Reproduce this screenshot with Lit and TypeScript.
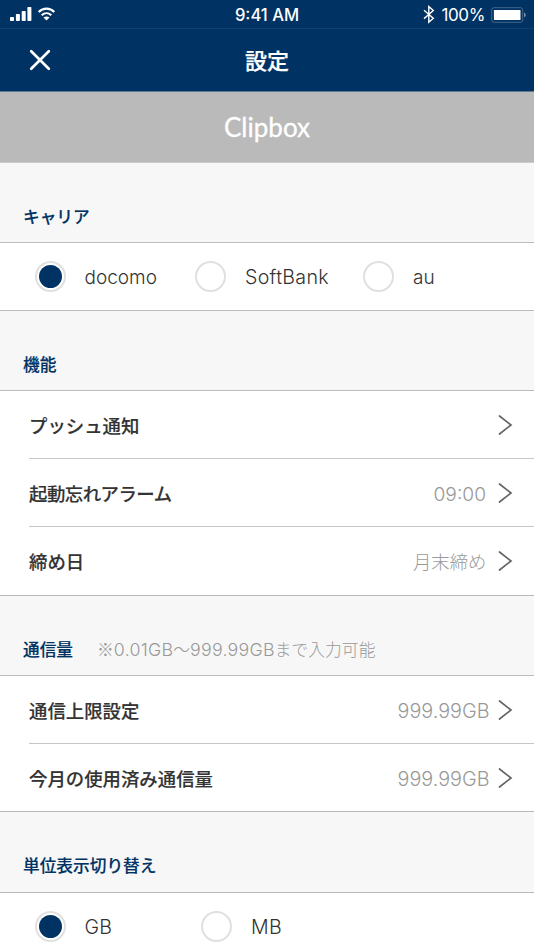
import { LitElement, html, css, svg, nothing } from "lit";
import { customElement, property, state } from "lit/decorators.js";
import { classMap } from "lit/directives/class-map.js";

const signalIcon = svg`<svg class="signal" width="22" height="14" viewBox="0 0 22 14" fill="#fff">
  <rect x="0" y="10" width="4" height="4" rx=".7"/><rect x="5.9" y="7" width="4" height="7" rx=".7"/>
  <rect x="11.7" y="4" width="4" height="10" rx=".7"/><rect x="17.4" y="0" width="4" height="14" rx=".7"/></svg>`;

const wifiIcon = svg`<svg class="wifi" width="18" height="14" viewBox="0 0 18 14">
  <g fill="none" stroke="#fff" stroke-width="2.100"><path d="M.7 5.100C5.200 .5 11.800 .5 16.300 5.100"/><path d="M3.700 8.300C6.500 5.500 10.500 5.500 13.300 8.300"/></g>
  <path fill="#fff" d="M8.500 13.500 5.500 10.500C7.200 9.100 9.800 9.100 11.500 10.500Z"/></svg>`;

const bluetoothIcon = svg`<svg class="bluetooth" width="12" height="19" viewBox="0 0 12 19">
  <path fill="none" stroke="#fff" stroke-width="1.400" d="M1 5.300 10.300 13.300 5.800 17.300V1.600L10.300 5.600 1 13.600"/></svg>`;

const batteryIcon = svg`<svg class="battery" width="36" height="16" viewBox="0 0 36 16">
  <rect x=".7" y=".7" width="31" height="14.600" rx="2.200" fill="none" stroke="#fff" stroke-opacity=".25" stroke-width="1"/>
  <rect x="2.900" y="3" width="26.600" height="10" rx=".5" fill="#fff"/>
  <path d="M33 5.600Q34.800 6.500 34.800 8T33 10.400Z" fill="#fff" fill-opacity=".45"/></svg>`;

const closeIcon = svg`<svg width="22" height="22" viewBox="0 0 22 22">
  <path d="M2.200 2.200 19.800 19.800M19.800 2.200 2.200 19.800" stroke="#fff" stroke-width="2.700" stroke-linecap="round"/></svg>`;

const chevronIcon = svg`<svg width="15" height="20" viewBox="0 0 15 20">
  <path d="M1.500 1 13 10 1.500 19" fill="none" stroke="#666" stroke-width="1.700" stroke-linecap="round"/></svg>`;

@customElement("status-bar")
export class StatusBar extends LitElement {
  static styles = css`
    :host {
      display: grid;
      grid-template-columns: 1fr auto 1fr;
      height: 28px;
      align-items: center;
      color: #fff;
      font: 400 17px/26px Inter, sans-serif;
      border-bottom: 1px solid #123f6c;
    }
    svg { display: block; }
    .left { display: flex; gap: 6px; padding-left: 10px; }
    .time { font-weight: 500; font-size: 16.6px; padding-top: 1px; }
    .right { display: flex; justify-content: flex-end; align-items: center; padding-right: 7px; }
    .percent { margin: 1px 6px 0 7px; letter-spacing: -0.4px; }
    .battery { margin-top: 1px; }
  `;
  render() {
    return html`<div class="left">${signalIcon}${wifiIcon}</div>
      <div class="time">9:41 AM</div>
      <div class="right">${bluetoothIcon}<span class="percent">100%</span>${batteryIcon}</div>`;
  }
}

@customElement("setting-row")
export class SettingRow extends LitElement {
  @property() label = "";
  @property() value = "";
  static styles = css`
    :host { display: flex; align-items: center; flex: 1; padding-right: 21.500px; }
    .label { flex: 1; font-weight: 500; font-size: 18.400px; line-height: 28px; color: #333; -webkit-text-stroke: 0.150px #333; }
    .tight { letter-spacing: -0.5px; }
    .value { font-family: Inter, "Noto Sans CJK JP", sans-serif; font-weight: 300; font-size: 19.200px; line-height: 28px; color: #999; margin-right: 11.500px; padding-top: 2px; }
    .amount { margin-right: 8px; font-size: 19.800px; }
    .cjk { font-size: 18.400px; margin-right: 11px; }
    svg { display: block; }
  `;
  render() {
    const kind = { value: true, amount: this.value.endsWith("GB"), cjk: this.value.endsWith("め") };
    return html`<span class=${classMap({ label: true, tight: this.label.includes("ー") })}>${this.label}</span>
      ${this.value ? html`<span class=${classMap(kind)}>${this.value}</span>` : nothing}
      ${chevronIcon}`;
  }
}

@customElement("radio-option")
export class RadioOption extends LitElement {
  @property() label = "";
  @property({ type: Boolean }) checked = false;
  static styles = css`
    :host { display: flex; align-items: center; gap: 19px; cursor: pointer; }
    .ring { box-sizing: border-box; width: 31px; height: 31px; border-radius: 50%; border: 2px solid #e0e0e0; display: grid; place-items: center; }
    .dot { width: 23px; height: 23px; border-radius: 50%; background: #003263; }
    .label { font: 300 19px/28px Inter, sans-serif; color: #333; padding-top: 3px; }
    .capital { font-size: 19.600px; letter-spacing: 0.3px; padding-top: 2px; }
  `;
  render() {
    const capital = /^[A-Z]/.test(this.label);
    return html`<span class="ring">${this.checked ? html`<span class="dot"></span>` : nothing}</span>
      <span class=${classMap({ label: true, capital })}>${this.label}</span>`;
  }
}

@customElement("app-root")
export class AppRoot extends LitElement {
  @state() private carrier = "docomo";
  @state() private unit = "GB";

  static styles = css`
    :host {
      display: block;
      height: 950px;
      overflow: hidden;
      background: #f7f7f7;
      color: #333;
      font-family: "Noto Sans CJK JP", sans-serif;
    }
    .top { background: #003263; }
    .nav { display: grid; grid-template-columns: 1fr auto 1fr; align-items: center; height: 62px; border-bottom: 1px solid #607b96; }
    .close { display: flex; padding-left: 29px; }
    h1 { margin: 0; padding-bottom: 2px; font-size: 22px; line-height: 32px; font-weight: 500; color: #fff; -webkit-text-stroke: 0.250px #fff; }
    .ad { height: 70px; background: #bababa; border-bottom: 1px solid #ccc; margin-bottom: -0.600px; display: flex; justify-content: center; align-items: center; font: 400 26px/32px Lato, sans-serif; color: #fff; -webkit-text-stroke: 0.300px #fff; }
    .head { box-sizing: border-box; height: 79.400px; padding: 27px 23px 0; display: flex; gap: 24px; align-items: center; }
    h2 { margin: 0; font-size: 16.700px; line-height: 28px; font-weight: 500; color: #003263; -webkit-text-stroke: 0.150px #003263; }
    .note { font-size: 16.800px; line-height: 28px; font-weight: 300; color: #999; }
    .range { font-family: Inter, sans-serif; font-size: 17.800px; line-height: 1; letter-spacing: 0.250px; }
    .group { background: #fff; border: solid #bbb; border-width: 1px 0; }
    .radios { display: grid; height: 67.100px; padding-left: 34.500px; }
    .carriers { grid-template-columns: 160.500px 168px auto; }
    .units { grid-template-columns: 166.500px auto; }
    .row { display: flex; height: 67.100px; margin-left: 29px; }
    .row + .row { border-top: 1px solid #c6c6c6; }
  `;

  private head(title: string, note: unknown = nothing) {
    return html`<div class="head"><h2>${title}</h2>${note}</div>`;
  }
  private rows(items: string[][]) {
    return html`<div class="group">${items.map(
      ([label, value]) => html`<div class="row"><setting-row .label=${label} .value=${value}></setting-row></div>`
    )}</div>`;
  }
  private radios(kind: string, names: string[], current: string, pick: (n: string) => void) {
    return html`<div class="group radios ${kind}">${names.map(
      (n) => html`<radio-option .label=${n} .checked=${n === current} @click=${() => pick(n)}></radio-option>`
    )}</div>`;
  }

  render() {
    const note = html`<span class="note">※<span class="range">0.01GB</span>〜<span class="range">999.99GB</span>まで入力可能</span>`;
    return html`
      <header class="top">
        <status-bar></status-bar>
        <div class="nav"><span class="close">${closeIcon}</span><h1>設定</h1></div>
      </header>
      <div class="ad">Clipbox</div>
      ${this.head("キャリア")}
      ${this.radios("carriers", ["docomo", "SoftBank", "au"], this.carrier, (n) => (this.carrier = n))}
      ${this.head("機能")}
      ${this.rows([["プッシュ通知", ""], ["起動忘れアラーム", "09:00"], ["締め日", "月末締め"]])}
      ${this.head("通信量", note)}
      ${this.rows([["通信上限設定", "999.99GB"], ["今月の使用済み通信量", "999.99GB"]])}
      ${this.head("単位表示切り替え")}
      ${this.radios("units", ["GB", "MB"], this.unit, (n) => (this.unit = n))}
    `;
  }
}
